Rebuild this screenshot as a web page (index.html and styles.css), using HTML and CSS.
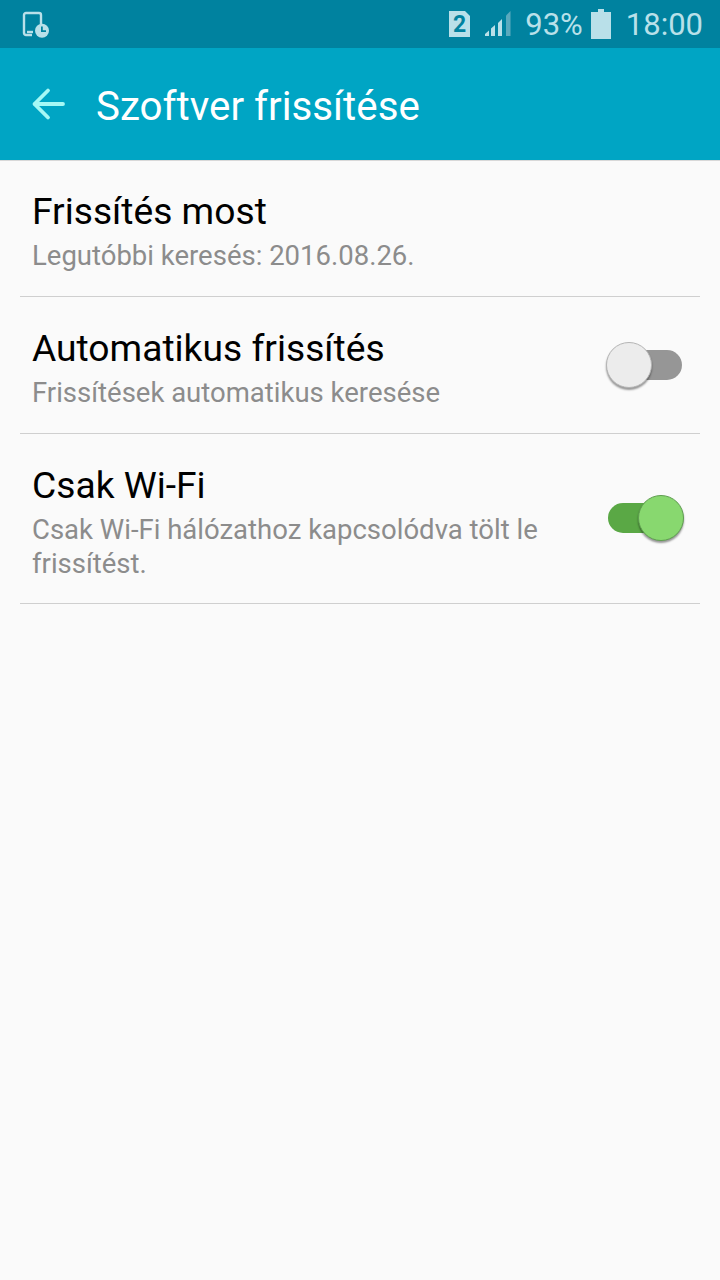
FILE: index.html
```html
<!DOCTYPE html>
<html lang="hu">
<head>
  <meta charset="UTF-8" />
  <meta name="viewport" content="width=device-width, initial-scale=1.0" />
  <title>Szoftver frissítése</title>
  <link rel="stylesheet" href="styles.css">
</head>
<body>
  <div class="statusbar">
    <svg class="update-icon" width="28" height="28" viewBox="0 0 28 28">
      <path d="M11 24H5a2 2 0 0 1-2-2V4a2 2 0 0 1 2-2h13a2 2 0 0 1 2 2v9" transform="translate(0 1)" fill="none" stroke="#b9e0e9" stroke-width="2.4"/>
      <path d="M6 22h6" stroke="#b9e0e9" stroke-width="2.4"/>
      <circle cx="21" cy="20.7" r="7" fill="#b9e0e9"/>
      <path d="M20 16.5v5.5h5v-1.8h-3.2v-3.7z" fill="#00829f"/>
    </svg>
    <div class="status-right">
      <svg class="sim-icon" width="21" height="26" viewBox="0 0 21 26">
        <path d="M0 0h16l5 5v21H0z" fill="#b9e0e9"/>
        <text x="10.5" y="21" text-anchor="middle" class="sim-num">2</text>
      </svg>
      <svg class="signal-icon" width="26" height="26" viewBox="0 0 26 26">
        <path d="M0 25v-2l4-3.500v5.500z" fill="#b9e0e9"/>
        <path d="M6 25v-7.500l4-3.500v11z" fill="#b9e0e9"/>
        <path d="M13 25V12l4-4v17z" fill="#b9e0e9"/>
        <path d="M21 25V4.500L25.500 0v25z" fill="#5aa9bd"/>
      </svg>
      <span class="percent">93%</span>
      <svg class="battery-icon" width="20" height="30" viewBox="0 0 20 30">
        <path d="M7 0h6v3h7v27H0V3h7z" fill="#b9e0e9"/>
      </svg>
      <span class="clock">18:00</span>
    </div>
  </div>

  <div class="appbar">
    <svg class="back" width="36" height="36" viewBox="0 0 36 36">
      <path d="M33 18H4.500M18 4.500L4.500 18 18 31.500" fill="none" stroke="#a6f8f5" stroke-width="3.800" stroke-linecap="round" stroke-linejoin="round"/>
    </svg>
    <h1>Szoftver frissítése</h1>
  </div>

  <div class="list">
    <div class="row">
      <div class="row-text">
        <div class="row-title">Frissítés most</div>
        <div class="row-sub">Legutóbbi keresés: 2016.08.26.</div>
      </div>
    </div>
    <div class="row">
      <div class="row-text">
        <div class="row-title">Automatikus frissítés</div>
        <div class="row-sub">Frissítések automatikus keresése</div>
      </div>
      <div class="switch off"><span class="knob"></span></div>
    </div>
    <div class="row">
      <div class="row-text">
        <div class="row-title">Csak Wi-Fi</div>
        <div class="row-sub">Csak Wi-Fi hálózathoz kapcsolódva tölt le frissítést.</div>
      </div>
      <div class="switch on"><span class="knob"></span></div>
    </div>
  </div>
</body>
</html>
```

FILE: styles.css
```css
* {
  box-sizing: border-box;
}
html, body {
  height: 100%;
}
body {
  margin: 0;
  background: #fafafa;
  font-family: Roboto, "Liberation Sans", sans-serif;
  overflow: hidden;
}
.statusbar {
  height: 48px;
  background: #00829f;
  display: flex;
  align-items: center;
  justify-content: space-between;
  padding: 0 17px 0 21px;
  color: #b9e0e9;
}
.status-right {
  display: flex;
  align-items: center;
}
.sim-icon {
  margin-right: 15px;
}
.signal-icon {
  margin-right: 14px;
}
.sim-num {
  font: bold 23px Roboto, sans-serif;
  fill: #00829f;
}
.percent {
  font-size: 31px;
  margin-right: 8px;
}
.battery-icon {
  margin-right: 15px;
}
.clock {
  font-size: 31px;
}
.appbar {
  height: 113px;
  background: #00a5c4;
  display: flex;
  align-items: center;
  padding-left: 30px;
  border-bottom: 1px solid #d8d8d8;
}
.appbar h1 {
  margin: 4px 0 0 30px;
  font-size: 40.3px;
  font-weight: 400;
  color: #fff;
}
.list {
  padding: 0 20px;
}
.row {
  display: flex;
  align-items: center;
  justify-content: space-between;
  padding: 28px 18px 23px 12px;
  border-bottom: 1px solid #cfcfcf;
}
.row:first-child {
  padding-top: 27px;
}
.row:last-child {
  padding-bottom: 22px;
}
.row-text {
  flex: 1;
  max-width: 530px;
}
.row-title {
  font-size: 37.2px;
  line-height: 46px;
  color: #000;
}
.row-sub {
  font-size: 27.5px;
  line-height: 34px;
  color: #8c8c8c;
  margin-top: 5px;
}
.switch {
  position: relative;
  width: 74px;
  height: 30px;
  border-radius: 15px;
}
.switch.off {
  background: #969696;
  margin-top: -5px;
}
.switch.on {
  background: #5aa845;
  margin-top: -7px;
}
.knob {
  position: absolute;
  top: -8px;
  width: 46px;
  height: 46px;
  border-radius: 50%;
  box-shadow: 0 2px 2px rgba(0, 0, 0, 0.4);
}
.off .knob {
  left: -2px;
  background: #ececec;
  border: 1px solid #b5b5b5;
}
.on .knob {
  right: -2px;
  background: #88d86f;
  border: 1px solid #5f9e50;
}
```
